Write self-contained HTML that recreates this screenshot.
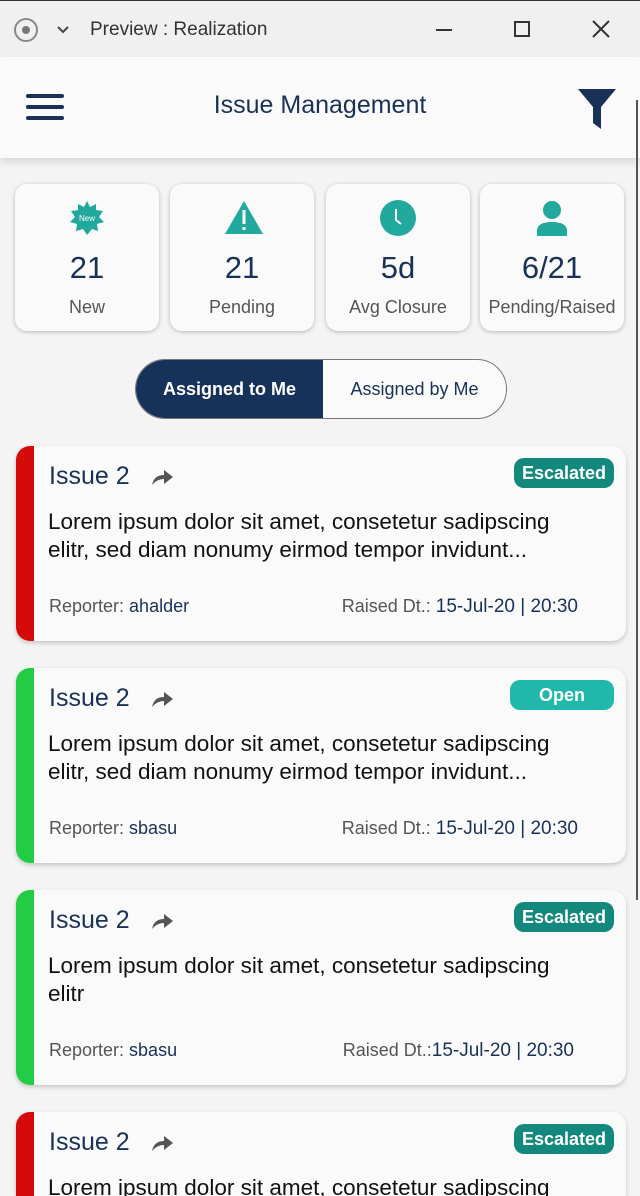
<!DOCTYPE html>
<html style="overflow:hidden;width:640px;height:1196px"><head><meta charset="utf-8"><style>
*{box-sizing:border-box;margin:0;padding:0}
body{width:640px;height:1196px;overflow:hidden;background:#f4f4f4;font-family:"Liberation Sans",sans-serif;position:relative}
.tb{position:absolute;left:0;top:0;width:640px;height:57px;background:#f0f0f0;border-top:1px solid #333}
.tb .t{position:absolute;left:90px;top:18px;font-size:19px;color:#333}
.hdr{position:absolute;left:0;top:57px;width:640px;height:101px;background:#fafafa;box-shadow:0 4px 8px rgba(0,0,0,.12)}
.hdr .t{position:absolute;left:0;right:0;top:34px;text-align:center;font-size:25px;color:#1a3157}
.sb{position:absolute;left:636px;top:100px;width:2px;height:800px;background:#555}
.st{position:absolute;top:184px;width:144px;height:147px;background:#fafafa;border-radius:12px;box-shadow:0 1px 4px rgba(0,0,0,.25);text-align:center}
.st svg{position:absolute;left:50%;top:16px;margin-left:-18px}
.st .n{position:absolute;left:0;right:0;top:66px;font-size:31px;color:#1a3157}
.st .l{position:absolute;left:0;right:0;top:113px;font-size:18px;color:#555}
.tg{position:absolute;left:135px;top:359px;width:372px;height:60px;border:1px solid #777;border-radius:30px;background:#fafafa;overflow:hidden}
.tg .a{position:absolute;left:0;top:0;width:187px;height:60px;background:#17325a;color:#fff;font-size:18px;font-weight:bold;text-align:center;line-height:58px}
.tg .b{position:absolute;left:187px;top:0;right:0;color:#1a3157;font-size:18px;text-align:center;line-height:58px}
.c{position:absolute;left:16px;width:610px;height:195px;background:#fafafa;border-radius:14px;box-shadow:0 2px 5px rgba(0,0,0,.2);overflow:hidden}
.c .bar{position:absolute;left:0;top:0;bottom:0;width:18px}
.c .h{position:absolute;left:33px;top:16px;font-size:25px;color:#1a3157}
.c .ar{position:absolute;left:136px;top:22px}
.c .bd{position:absolute;left:32px;top:62px;width:570px;font-size:22.5px;line-height:28px;color:#111;white-space:nowrap}
.c .f{position:absolute;left:33px;top:150px;font-size:18px;color:#555}
.c .f b,.c .r b{font-weight:normal;color:#1a3157}
.c .r{position:absolute;right:48px;top:150px;font-size:18px;color:#555}
.c .r b{font-size:19px}
.bg{position:absolute;right:12px;top:12px;height:30px;border-radius:10px;padding:0 8px;color:#fff;font-size:18px;font-weight:bold;line-height:30px}
</style></head><body>
<div class="tb">
<svg style="position:absolute;left:13px;top:16px" width="26" height="26"><circle cx="13" cy="13" r="11" fill="none" stroke="#888" stroke-width="2"/><circle cx="13" cy="13" r="4" fill="#777"/></svg>
<svg style="position:absolute;left:56px;top:24px" width="14" height="10"><path d="M2 2l5 5 5-5" fill="none" stroke="#444" stroke-width="2"/></svg>
<div class="t">Preview : Realization</div>
<div style="position:absolute;left:436px;top:28px;width:16px;height:2px;background:#333"></div>
<div style="position:absolute;left:514px;top:20px;width:16px;height:16px;border:2px solid #333"></div>
<svg style="position:absolute;left:592px;top:19px" width="18" height="18"><path d="M1 1l16 16M17 1L1 17" stroke="#333" stroke-width="2"/></svg>
</div>
<div class="hdr">
<svg style="position:absolute;left:26px;top:37px" width="40" height="28"><rect y="0" width="38" height="4" rx="2" fill="#1a3157"/><rect y="11" width="38" height="4" rx="2" fill="#1a3157"/><rect y="22" width="38" height="4" rx="2" fill="#1a3157"/></svg>
<div class="t">Issue Management</div>
<svg style="position:absolute;left:578px;top:32px" width="40" height="42"><path d="M0 0h38L23 18v22l-8-6V18z" fill="#1a3157"/></svg>
</div>
<div class="sb"></div>

<div class="st" style="left:15px"><svg width="36" height="36" viewBox="0 0 36 36"><polygon points="18,1 21,7 27,4 27,10 34,11 30,17 35,22 28,24 29,31 23,29 18,35 14,29 7,31 8,24 1,22 6,17 2,11 9,10 9,4 15,7" fill="#20a99c"/><text x="18" y="21" font-size="8" fill="#fff" text-anchor="middle" font-family="Liberation Sans">New</text></svg><div class="n">21</div><div class="l">New</div></div>
<div class="st" style="left:170px"><svg width="40" height="36" viewBox="0 0 40 36"><path d="M20 1L39 34H1z" fill="#20a99c"/><rect x="18.5" y="10" width="3" height="14" fill="#fff"/><rect x="18.5" y="27" width="3" height="3" fill="#fff"/></svg><div class="n">21</div><div class="l">Pending</div></div>
<div class="st" style="left:326px"><svg width="36" height="36"><circle cx="18" cy="18" r="18" fill="#20a99c"/><path d="M16 9v11l5 4" fill="none" stroke="#fff" stroke-width="2"/></svg><div class="n">5d</div><div class="l">Avg Closure</div></div>
<div class="st" style="left:480px"><svg width="36" height="36"><circle cx="18" cy="10" r="9" fill="#20a99c"/><path d="M3 36v-5q0-9 15-9t15 9v5z" fill="#20a99c"/></svg><div class="n">6/21</div><div class="l">Pending/Raised</div></div>

<div class="tg"><div class="a">Assigned to Me</div><div class="b">Assigned by Me</div></div>

<div class="c" style="top:446px"><div class="bar" style="background:#d50a0a"></div><div class="h">Issue 2</div><svg class="ar" width="22" height="18"><path d="M0 17q2-10 12-10V2l9 7-9 7v-5q-7 0-12 6z" fill="#555"/></svg><div class="bg" style="background:#13887d">Escalated</div><div class="bd">Lorem ipsum dolor sit amet, consetetur sadipscing<br>elitr, sed diam nonumy eirmod tempor invidunt...</div><div class="f">Reporter: <b>ahalder</b></div><div class="r">Raised Dt.: <b>15-Jul-20 | 20:30</b></div></div>

<div class="c" style="top:668px"><div class="bar" style="background:#22cc44"></div><div class="h">Issue 2</div><svg class="ar" width="22" height="18"><path d="M0 17q2-10 12-10V2l9 7-9 7v-5q-7 0-12 6z" fill="#555"/></svg><div class="bg" style="background:#20b8aa;width:104px;text-align:center">Open</div><div class="bd">Lorem ipsum dolor sit amet, consetetur sadipscing<br>elitr, sed diam nonumy eirmod tempor invidunt...</div><div class="f">Reporter: <b>sbasu</b></div><div class="r">Raised Dt.: <b>15-Jul-20 | 20:30</b></div></div>

<div class="c" style="top:890px"><div class="bar" style="background:#22cc44"></div><div class="h">Issue 2</div><svg class="ar" width="22" height="18"><path d="M0 17q2-10 12-10V2l9 7-9 7v-5q-7 0-12 6z" fill="#555"/></svg><div class="bg" style="background:#13887d">Escalated</div><div class="bd">Lorem ipsum dolor sit amet, consetetur sadipscing<br>elitr</div><div class="f">Reporter: <b>sbasu</b></div><div class="r" style="right:52px">Raised Dt.:<b>15-Jul-20 | 20:30</b></div></div>

<div class="c" style="top:1112px;height:84px;border-bottom-left-radius:0;border-bottom-right-radius:0"><div class="bar" style="background:#d50a0a"></div><div class="h">Issue 2</div><svg class="ar" width="22" height="18"><path d="M0 17q2-10 12-10V2l9 7-9 7v-5q-7 0-12 6z" fill="#555"/></svg><div class="bg" style="background:#13887d">Escalated</div><div class="bd">Lorem ipsum dolor sit amet, consetetur sadipscing</div></div>
</body></html>
